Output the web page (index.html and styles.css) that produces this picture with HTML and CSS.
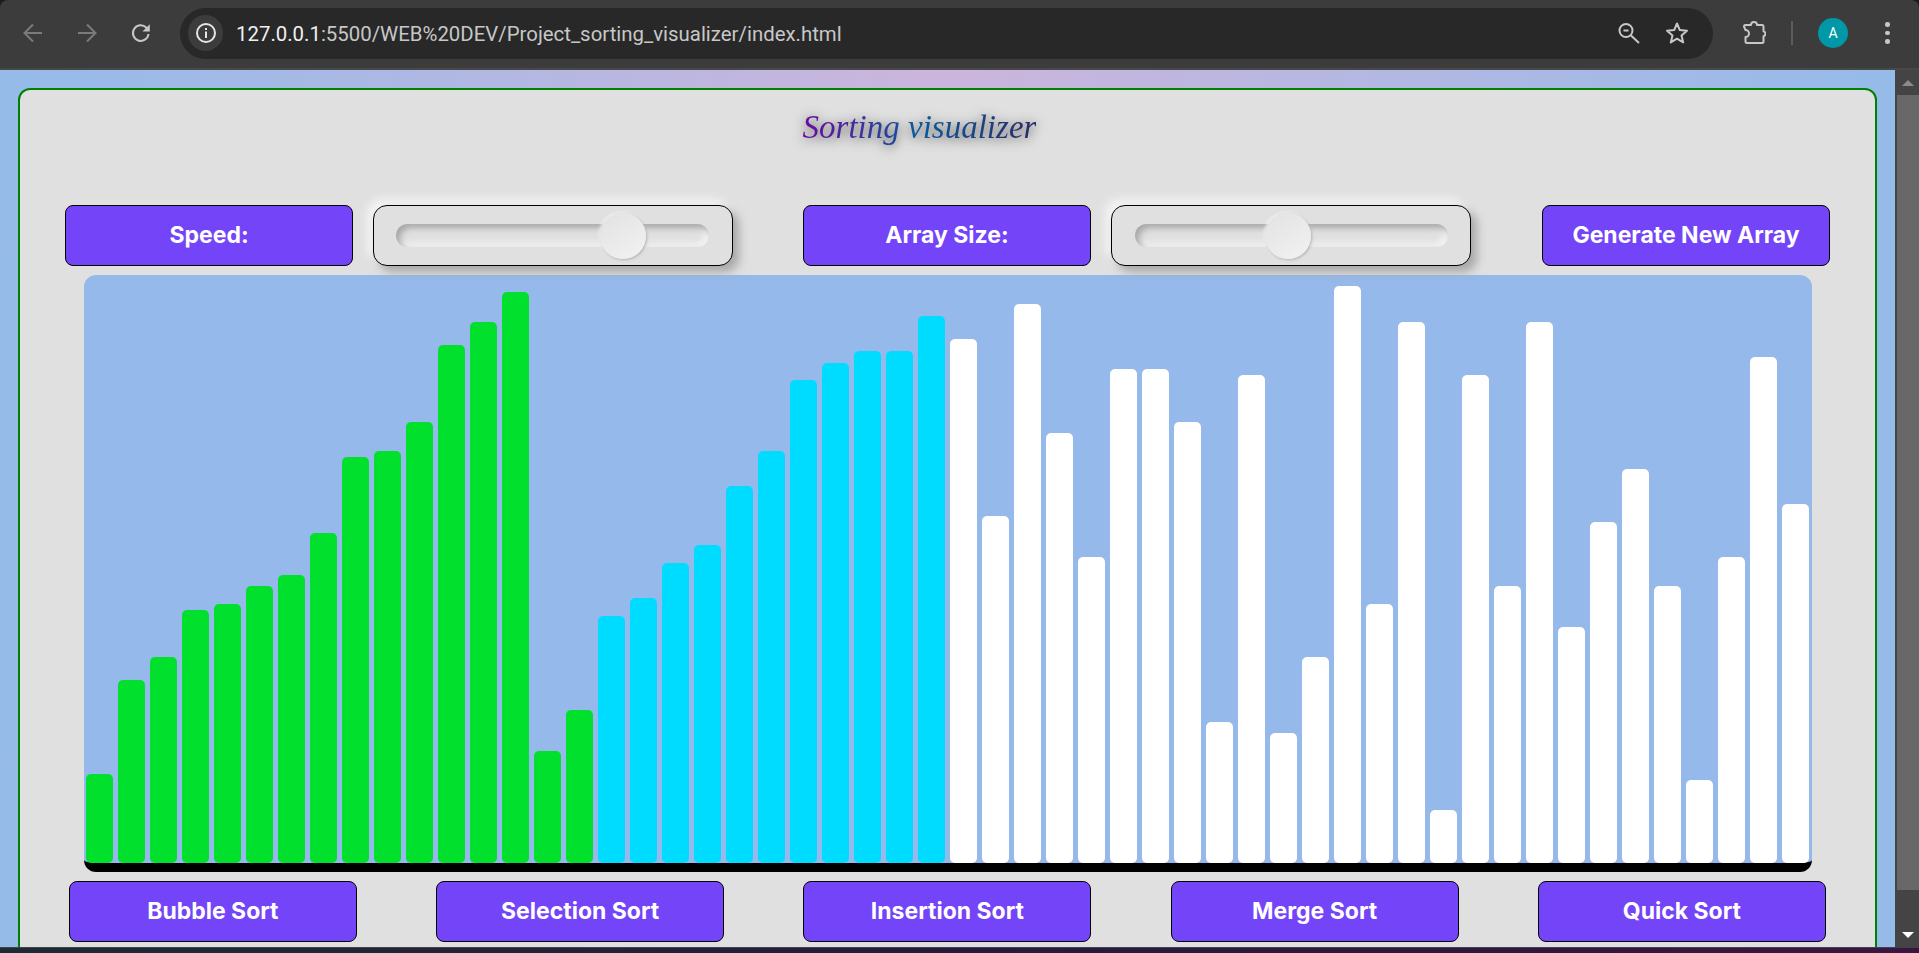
FILE: index.html
```html
<!DOCTYPE html>
<html lang="en">
<head>
<meta charset="utf-8">
<title>Sorting visualizer</title>
<link rel="stylesheet" href="styles.css">
</head>
<body>
<div class="window">
  <header class="toolbar">
    <svg class="tool" viewBox="0 0 24 24"><path class="dim" d="M21 12H4M12 3.500L3.500 12l8.500 8.500"/></svg>
    <svg class="tool" viewBox="0 0 24 24"><path class="dim" d="M3 12h17M12 3.500l8.500 8.500-8.500 8.500"/></svg>
    <svg class="tool" viewBox="0 0 24 24"><path class="line" d="M19.500 13a7.800 7.800 0 1 1-2.300-6.500l2.300 2.500"/><path class="fill" d="M20.800 3.200v7.300h-7.300z"/></svg>
    <div class="omnibox">
      <span class="chip">
        <svg class="info" viewBox="0 0 24 24"><circle class="line" cx="12" cy="12" r="9"/><path class="fill" d="M11 10.500h2V17h-2zM11 7h2v2h-2z"/></svg>
      </span>
      <span class="url"><span class="host">127.0.0.1</span>:5500/WEB%20DEV/Project_sorting_visualizer/index.html</span>
      <svg class="tool zoomicon" viewBox="0 0 24 24"><circle class="line" cx="9" cy="9.500" r="6.500"/><path class="line" d="M6.500 9.500h5M14 14.500l8 7.500"/></svg>
      <svg class="tool" viewBox="0 0 24 24"><path class="line" d="M12 2.500l2.800 6.600 7.200.6-5.500 4.700 1.700 7-6.200-3.700-6.200 3.700 1.700-7L2 9.700l7.200-.6z"/></svg>
    </div>
    <svg class="tool ext" viewBox="0 0 24 24"><path class="line" d="M2 5.500c0-.8.600-1.500 1.500-1.500H9a3 3 0 0 1 6 0h5c.8 0 1.500.6 1.500 1.500v4.700a2.600 2.600 0 0 1 0 5v5.300c0 .8-.6 1.500-1.500 1.500H5c-.8 0-1.500-.6-1.500-1.500v-4.500a3.500 3.500 0 0 0 0-7z"/></svg>
    <span class="divider"></span>
    <span class="avatar">A</span>
    <span class="dots"><i></i><i></i><i></i></span>
  </header>

  <div class="content">
    <main class="viewport">
      <section class="card">
        <h1 class="title"><span class="title-text">Sorting visualizer</span></h1>

        <div class="controls">
          <div class="group">
            <div class="btn">Speed:</div>
            <div class="slider slider-speed"><input type="range" min="0" max="267" value="204"></div>
          </div>
          <div class="group">
            <div class="btn">Array Size:</div>
            <div class="slider"><input type="range" min="0" max="267" value="131"></div>
          </div>
          <button class="btn btn-generate">Generate New Array</button>
        </div>

        <div class="bars">
          <div class="bar green" style="height:89px"></div>
          <div class="bar green" style="height:183px"></div>
          <div class="bar green" style="height:206px"></div>
          <div class="bar green" style="height:253px"></div>
          <div class="bar green" style="height:259px"></div>
          <div class="bar green" style="height:277px"></div>
          <div class="bar green" style="height:288px"></div>
          <div class="bar green" style="height:330px"></div>
          <div class="bar green" style="height:406px"></div>
          <div class="bar green" style="height:412px"></div>
          <div class="bar green" style="height:441px"></div>
          <div class="bar green" style="height:518px"></div>
          <div class="bar green" style="height:541px"></div>
          <div class="bar green" style="height:571px"></div>
          <div class="bar green" style="height:112px"></div>
          <div class="bar green" style="height:153px"></div>
          <div class="bar cyan" style="height:247px"></div>
          <div class="bar cyan" style="height:265px"></div>
          <div class="bar cyan" style="height:300px"></div>
          <div class="bar cyan" style="height:318px"></div>
          <div class="bar cyan" style="height:377px"></div>
          <div class="bar cyan" style="height:412px"></div>
          <div class="bar cyan" style="height:483px"></div>
          <div class="bar cyan" style="height:500px"></div>
          <div class="bar cyan" style="height:512px"></div>
          <div class="bar cyan" style="height:512px"></div>
          <div class="bar cyan" style="height:547px"></div>
          <div class="bar" style="height:524px"></div>
          <div class="bar" style="height:347px"></div>
          <div class="bar" style="height:559px"></div>
          <div class="bar" style="height:430px"></div>
          <div class="bar" style="height:306px"></div>
          <div class="bar" style="height:494px"></div>
          <div class="bar" style="height:494px"></div>
          <div class="bar" style="height:441px"></div>
          <div class="bar" style="height:141px"></div>
          <div class="bar" style="height:488px"></div>
          <div class="bar" style="height:130px"></div>
          <div class="bar" style="height:206px"></div>
          <div class="bar" style="height:577px"></div>
          <div class="bar" style="height:259px"></div>
          <div class="bar" style="height:541px"></div>
          <div class="bar" style="height:53px"></div>
          <div class="bar" style="height:488px"></div>
          <div class="bar" style="height:277px"></div>
          <div class="bar" style="height:541px"></div>
          <div class="bar" style="height:236px"></div>
          <div class="bar" style="height:341px"></div>
          <div class="bar" style="height:394px"></div>
          <div class="bar" style="height:277px"></div>
          <div class="bar" style="height:83px"></div>
          <div class="bar" style="height:306px"></div>
          <div class="bar" style="height:506px"></div>
          <div class="bar" style="height:359px"></div>
        </div>

        <div class="sorts">
          <button class="btn">Bubble Sort</button>
          <button class="btn">Selection Sort</button>
          <button class="btn">Insertion Sort</button>
          <button class="btn">Merge Sort</button>
          <button class="btn">Quick Sort</button>
        </div>
      </section>
    </main>
    <aside class="scrollbar">
      <span class="arrow-up"></span>
      <span class="thumb"></span>
      <span class="arrow-down"></span>
    </aside>
  </div>
  <div class="taskbar"></div>
</div>
</body>
</html>
```
FILE: styles.css
```css
* { box-sizing: border-box; }
html, body { margin: 0; height: 100%; overflow: hidden; background: #1c1c1c; }

.window { display: flex; flex-direction: column; height: 953px; width: 1919px; }

/* browser chrome */
.toolbar {
  flex: none;
  height: 70px;
  display: flex;
  align-items: center;
  padding: 0 20px 2px 21px;
  background: #3c3c3c;
  border-bottom: 2px solid #484848;
  border-radius: 8px 8px 0 0;
}
.tool { flex: none; width: 24px; height: 24px; margin-right: 30px; }
.dim { fill: none; stroke: #7b7b7b; stroke-width: 2; }
.line { fill: none; stroke: #c7c7c7; stroke-width: 2; stroke-linejoin: round; }
.fill { fill: #c7c7c7; }
.omnibox {
  flex: none;
  width: 1533px;
  height: 51px;
  margin-left: -3px;
  padding: 0 0 0 8px;
  display: flex;
  align-items: center;
  background: #282828;
  border-radius: 26px;
}
.omnibox .tool:last-child { margin-right: 24px; }
.zoomicon { margin-left: auto; margin-right: 24px; }
.chip {
  flex: none;
  width: 35px;
  height: 36px;
  display: flex;
  align-items: center;
  justify-content: center;
  background: #3c3c3c;
  border-radius: 18px;
}
.info { width: 24px; height: 24px; }
.info .line { stroke: #e6e6e6; }
.info .fill { fill: #e6e6e6; }
.url {
  margin-left: 13px;
  padding-top: 1px;
  font: 20.400px/26px "Roboto", "Liberation Sans", sans-serif;
  color: #c7c7c7;
  white-space: nowrap;
}
.host { color: #f0f0f0; }
.ext { margin: 0 0 0 29px; }
.divider { flex: none; width: 2px; height: 24px; margin-left: 25px; background: #5c5c5c; }
.avatar {
  flex: none;
  width: 30px;
  height: 30px;
  margin-left: 25px;
  border-radius: 50%;
  background: #0097a7;
  color: #fff;
  font: 14px/30px "Roboto", sans-serif;
  text-align: center;
}
.dots { flex: none; display: flex; flex-direction: column; gap: 3.800px; margin-left: 37px; }
.dots i { display: block; width: 4.500px; height: 4.500px; border-radius: 50%; background: #c7c7c7; }

/* page area */
.content { flex: 1; display: flex; min-height: 0; }
.viewport {
  flex: none;
  width: 1895px;
  height: 877px;
  padding: 18px 18px 0;
  overflow: hidden;
  background: linear-gradient(90deg, #95bbe9 0%, #ccb5dc 50%, #95bbe9 100%);
}
.card {
  width: 1859px;
  height: 920px;
  background: #e0e0e0;
  border: 2px solid #008000;
  border-radius: 12px;
}
.title {
  height: 115px;
  margin: 0;
  padding: 15px 56px 0 0;
  text-align: center;
  font: italic 400 33px/44px "Liberation Serif", serif;
}
.title-text {
  background: linear-gradient(90deg, #6a0aa0 0%, #0a5a9a 50%, #2a2a6a 100%);
  -webkit-background-clip: text;
  background-clip: text;
  color: transparent;
  display: inline-block;
  filter: drop-shadow(0 2px 6px rgba(40, 40, 40, .85));
}
.controls { display: flex; justify-content: center; gap: 70px; height: 61px; }
.group { display: flex; gap: 20px; }
.btn {
  flex: none;
  width: 288px;
  height: 61px;
  display: flex;
  align-items: center;
  justify-content: center;
  padding: 0;
  background: #7444f9;
  border: 1px solid #000;
  border-radius: 8px;
  color: #fff;
  font: 700 23px/1 "Inter", "Open Sans", sans-serif;
}
.btn-generate { margin-left: 1px; }
.slider {
  flex: none;
  width: 360px;
  height: 61px;
  display: flex;
  align-items: center;
  justify-content: center;
  background: #e0e0e0;
  border: 1.500px solid #000;
  border-radius: 14px;
  box-shadow: 6px 6px 10px #a8a8a8, -6px -6px 10px #f4f4f4;
}
.slider-speed { padding-right: 1px; }
.slider input {
  width: 313px;
  height: 23px;
  margin: 0;
  -webkit-appearance: none;
  appearance: none;
  background: transparent;
}
.slider input::-webkit-slider-runnable-track {
  height: 23px;
  border-radius: 12px;
  background: #e0e0e0;
  box-shadow: inset 4px 4px 6px #a8a8a8, inset -4px -4px 6px #f2f2f2;
}
.slider input::-webkit-slider-thumb {
  -webkit-appearance: none;
  appearance: none;
  width: 46px;
  height: 46px;
  margin-top: -11.500px;
  border-radius: 50%;
  background: linear-gradient(145deg, #e2e2e2, #f2f2f2);
  box-shadow: 1px 1px 3px #b0b0b0, -1px -1px 3px #f6f6f6;
}

.bars {
  display: flex;
  align-items: flex-end;
  justify-content: center;
  width: 1728px;
  height: 597px;
  margin: 9px auto;
  background: #95b9ea;
  border-bottom: 9px solid #000;
  border-radius: 12px;
}
.bar {
  flex: none;
  width: 27.500px;
  margin: 0 2.500px 0 2px;
  background: #fff;
  border-radius: 5px;
}
.green { background: #00e02d; }
.cyan { background: #00dcff; }

.sorts { display: flex; justify-content: center; gap: 79.250px; padding-right: .25px; }

/* scrollbar */
.scrollbar {
  flex: none;
  width: 24px;
  position: relative;
  display: flex;
  flex-direction: column;
  align-items: center;
  background: #444;
}
.arrow-up {
  margin: 10px 0 9px 2px;
  border-left: 6px solid transparent;
  border-right: 6px solid transparent;
  border-bottom: 6px solid #8a8a8a;
}
.thumb { width: 22px; height: 795px; margin-left: 2px; background: #686868; }
.arrow-down {
  margin: 42px 0 0 2px;
  border-left: 6px solid transparent;
  border-right: 6px solid transparent;
  border-top: 6px solid #fff;
}

.taskbar {
  flex: none;
  height: 6px;
  background: linear-gradient(90deg, #1d2b33 0%, #241c3a 50%, #3a1540 100%);
  border-top: 1px solid #45404f;
}
```
